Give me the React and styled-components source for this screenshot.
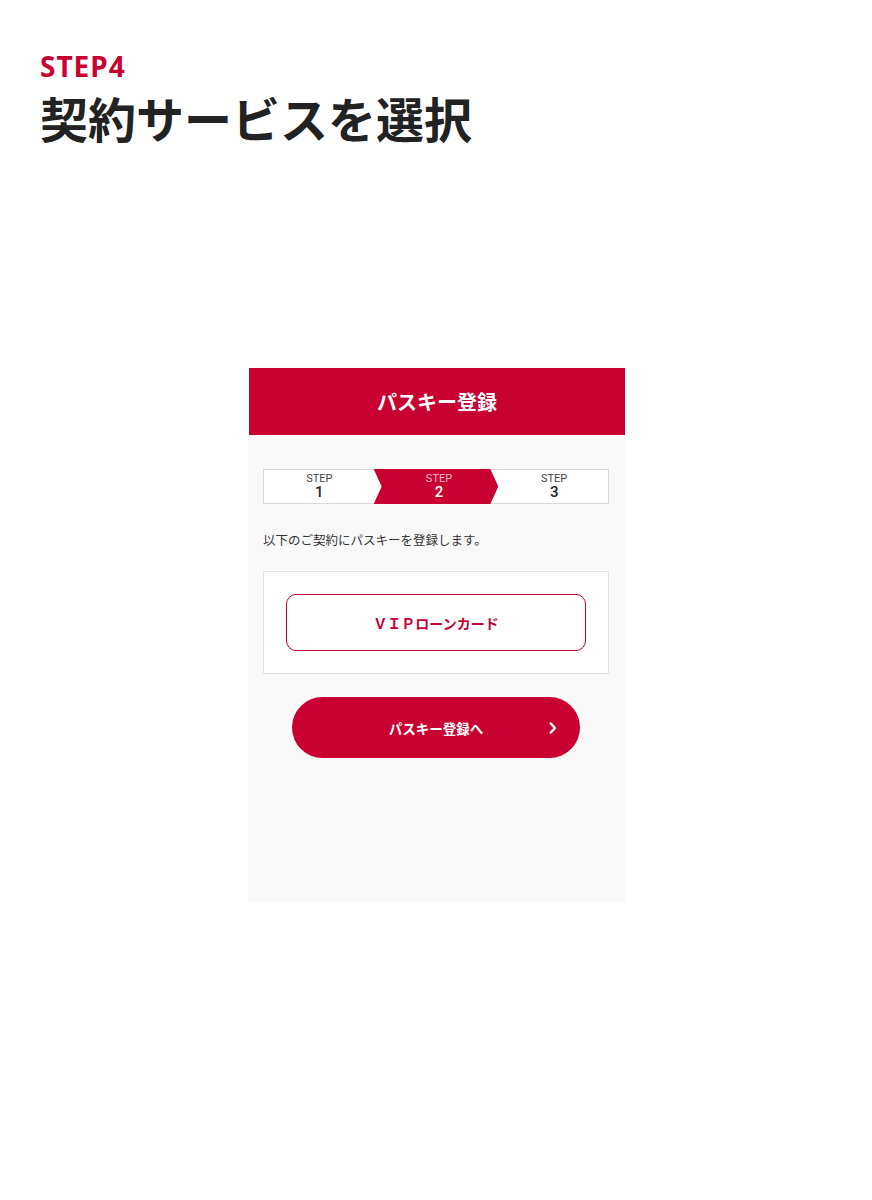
import React from 'react';
import styled, { createGlobalStyle } from 'styled-components';

const GlobalStyle = createGlobalStyle`
  body {
    margin: 0;
    background: #ffffff;
    font-family: "Noto Sans CJK JP", "Noto Sans", sans-serif;
    color: #222;
  }
`;

const RED = '#c90032';

const steps = [
  { label: 'STEP', num: '1' },
  { label: 'STEP', num: '2', active: true },
  { label: 'STEP', num: '3' },
];

const App = () => {
  return (
    <>
      <GlobalStyle />
      <Page>
        <StepLabel>STEP4</StepLabel>
        <Title>契約サービスを選択</Title>

        <Phone>
          <PhoneHeader>パスキー登録</PhoneHeader>
          <PhoneBody>
            <Stepper>
              {steps.map((s) => (
                <Step key={s.num} $active={s.active}>
                  <StepSmall $active={s.active}>{s.label}</StepSmall>
                  <StepNum $active={s.active}>{s.num}</StepNum>
                </Step>
              ))}
            </Stepper>

            <Lead>以下のご契約にパスキーを登録します。</Lead>

            <ServiceCard>
              <ServiceButton>ＶＩＰローンカード</ServiceButton>
            </ServiceCard>

            <PrimaryButton>
              パスキー登録へ
              <Chevron viewBox="0 0 8 12" aria-hidden="true">
                <path d="M1.8 1.5 L6 6 L1.8 10.5" />
              </Chevron>
            </PrimaryButton>
          </PhoneBody>
        </Phone>
      </Page>
    </>
  );
};

const Page = styled.div`
  padding: 50px 40px 0;
  min-height: 1150px;
`;

const StepLabel = styled.div`
  color: ${RED};
  font-family: "Noto Sans", "Noto Sans CJK JP", sans-serif;
  font-size: 28px;
  font-weight: 700;
  line-height: 32px;
  letter-spacing: 1px;
`;

const Title = styled.h1`
  margin: 5px 0 0;
  font-size: 48px;
  font-weight: 700;
  line-height: 60px;
  color: #222;
`;

const Phone = styled.div`
  width: 376px;
  height: 534px;
  margin: 221px 0 0 209px;
  background: #f9f9f9;
  box-shadow: 0 0 2px rgba(0, 0, 0, 0.06);
`;

const PhoneHeader = styled.div`
  height: 67px;
  background: ${RED};
  color: #fff;
  font-size: 20px;
  font-weight: 700;
  display: flex;
  align-items: center;
  justify-content: center;
`;

const PhoneBody = styled.div`
  padding: 34px 16px 0 14px;
`;

const Stepper = styled.div`
  display: grid;
  grid-template-columns: repeat(3, 1fr);
  height: 33px;
  border: 1px solid #d9d9d9;
  background: #fff;
`;

const Step = styled.div`
  position: relative;
  display: flex;
  flex-direction: column;
  align-items: center;
  justify-content: center;
  padding-left: ${(p) => (p.$active ? '6px' : '0')};

  &:first-child {
    padding-right: 4px;
  }

  &:last-child {
    padding-left: 7px;
  }

  &::before {
    content: '';
    display: ${(p) => (p.$active ? 'block' : 'none')};
    position: absolute;
    top: -1px;
    bottom: -1px;
    left: -5px;
    right: -5px;
    background: ${RED};
    clip-path: polygon(0 0, calc(100% - 8px) 0, 100% 50%, calc(100% - 8px) 100%, 0 100%, 8px 50%);
  }
`;

const StepSmall = styled.span`
  position: relative;
  font-family: Roboto, "Noto Sans CJK JP", sans-serif;
  font-size: 11px;
  line-height: 12px;
  color: ${(p) => (p.$active ? '#f6b7c6' : '#444')};
`;

const StepNum = styled.span`
  position: relative;
  font-family: Roboto, "Noto Sans CJK JP", sans-serif;
  font-size: 15px;
  font-weight: 500;
  line-height: 15px;
  color: ${(p) => (p.$active ? '#fff' : '#222')};
`;

const Lead = styled.p`
  margin: 27px 0 0;
  font-size: 12.5px;
  line-height: 18px;
  color: #333;
`;

const ServiceCard = styled.div`
  margin-top: 22px;
  width: 346px;
  box-sizing: border-box;
  padding: 22px 22px 22px;
  background: #fff;
  border: 1px solid #e2e2e2;
`;

const ServiceButton = styled.div`
  height: 57px;
  box-sizing: border-box;
  border: 1px solid ${RED};
  border-radius: 10px;
  background: #fff;
  display: flex;
  align-items: center;
  justify-content: center;
  color: ${RED};
  font-size: 14px;
  font-weight: 700;
`;

const PrimaryButton = styled.button`
  position: relative;
  display: flex;
  align-items: center;
  justify-content: center;
  width: 288px;
  height: 61px;
  margin: 23px 0 0 29px;
  border: none;
  border-radius: 31px;
  background: ${RED};
  color: #fff;
  font-family: "Noto Sans CJK JP", sans-serif;
  font-size: 13.5px;
  font-weight: 700;
  cursor: pointer;
`;

const Chevron = styled.svg`
  position: absolute;
  right: 23px;
  top: 50%;
  width: 8px;
  height: 12px;
  margin-top: -6px;
  fill: none;
  stroke: #fff;
  stroke-width: 2.4;
  stroke-linecap: round;
  stroke-linejoin: round;
`;

export default App;
